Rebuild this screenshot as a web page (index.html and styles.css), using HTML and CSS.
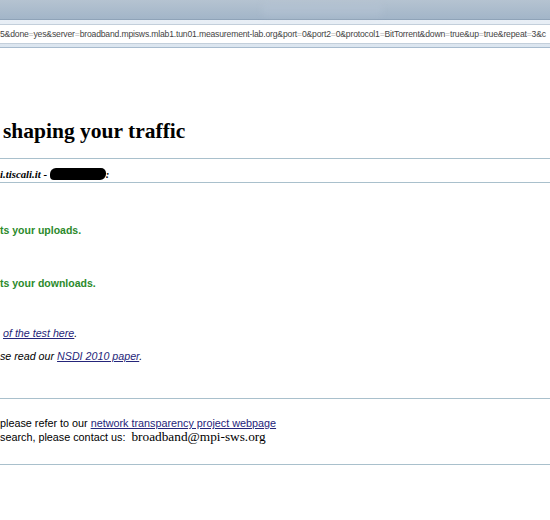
FILE: index.html
```html
<!DOCTYPE html>
<html>
<head>
<meta charset="utf-8">
<link rel="stylesheet" href="styles.css">
</head>
<body>
<div class="titlebar"><div class="ghost-tab"></div></div>
<div class="navbar">
  <div class="addr">5&amp;done<i>=</i>yes&amp;server<i>=</i>broadband.mpisws.mlab1.tun01.measurement-lab.org&amp;port<i>=</i>0&amp;port2<i>=</i>0&amp;protocol1<i>=</i>BitTorrent&amp;down<i>=</i>true&amp;up<i>=</i>true&amp;repeat<i>=</i>3&amp;c</div>
</div>
<div class="page">
  <h1 class="title">shaping your traffic</h1>
  <hr class="rule rule-a">
  <p class="host">i.tiscali.it - <span class="redact"></span>:</p>
  <hr class="rule rule-b">
  <p class="result result-up">ts your uploads.</p>
  <p class="result result-down">ts your downloads.</p>
  <p class="note note-first"><a href="#">of the test here</a>.</p>
  <p class="note">se read our <a href="#">NSDI 2010 paper</a>.</p>
  <hr class="rule rule-c">
  <p class="foot foot-first">please refer to our <a href="#">network transparency project webpage</a></p>
  <p class="foot">search, please contact us: &nbsp;<span class="email">broadband@mpi-sws.org</span></p>
  <hr class="rule rule-d">
</div>
</body>
</html>
```
FILE: styles.css
```css
html, body {
  margin: 0;
  padding: 0;
}
body {
  width: 550px;
  height: 520px;
  overflow: hidden;
  background: #ffffff;
  font-family: "Liberation Sans", Arial, sans-serif;
}
.titlebar {
  height: 19px;
  background: linear-gradient(#b5c3d1, #a2b5c8);
  border-bottom: 1px solid #8fa3b8;
  position: relative;
}
.ghost-tab {
  position: absolute;
  left: 262px;
  top: 3px;
  width: 120px;
  height: 14px;
  background: rgba(190, 204, 220, 0.25);
  border-radius: 3px;
  filter: blur(3px);
}
.navbar {
  height: 28px;
  background: linear-gradient(#e9eff6, #dbe5ef);
  border-bottom: 1px solid #a8bbce;
  padding-top: 4px;
  box-sizing: border-box;
}
.addr {
  height: 18px;
  line-height: 18px;
  background: #ffffff;
  border-top: 1px solid #c3cfdb;
  border-bottom: 1px solid #c3cfdb;
  font-family: "Liberation Sans", Arial, sans-serif;
  font-size: 8.6px;
  color: #444444;
  white-space: nowrap;
  overflow: hidden;
  letter-spacing: -0.17px;
}
.addr i {
  font-style: normal;
  color: #b0b0b0;
}
.page {
  padding-top: 1px;
}
.title {
  margin: 69px 0 0 3px;
  font-family: "Liberation Serif", "Times New Roman", serif;
  font-weight: bold;
  font-size: 21.5px;
  line-height: 26px;
  color: #000;
}
.rule {
  border: 0;
  height: 1px;
  background: #a9c0cc;
  margin: 0;
}
.rule-a { margin-top: 14px; }
.host {
  margin: 8px 0 0 0;
  font-family: "Liberation Serif", "Times New Roman", serif;
  font-weight: bold;
  font-style: italic;
  font-size: 10.8px;
  line-height: 15px;
  height: 15px;
  color: #000;
}
.redact {
  display: inline-block;
  width: 56px;
  height: 12px;
  background: #000;
  border-radius: 6px 5px 6px 4px;
  vertical-align: -2px;
}
.result {
  margin: 0;
  font-weight: bold;
  font-size: 10.5px;
  line-height: 14px;
  color: #2b8a2b;
}
.result-up { margin-top: 40px; }
.result-down { margin-top: 39px; }
.note {
  margin: 0;
  font-style: italic;
  font-size: 10.7px;
  line-height: 14px;
  color: #000;
}
.note-first { margin: 36px 0 0 3px; }
.note + .note { margin-top: 9px; }
.note a, .foot a {
  color: #25257a;
  text-decoration: underline;
}
.rule-c { margin-top: 35px; }
.foot {
  margin: 0;
  font-size: 10.8px;
  line-height: 14px;
  color: #000;
}
.foot-first { margin-top: 17px; }
.email {
  font-family: "Liberation Serif", "Times New Roman", serif;
  font-size: 13.3px;
}
.rule-d { margin-top: 20px; }
```
